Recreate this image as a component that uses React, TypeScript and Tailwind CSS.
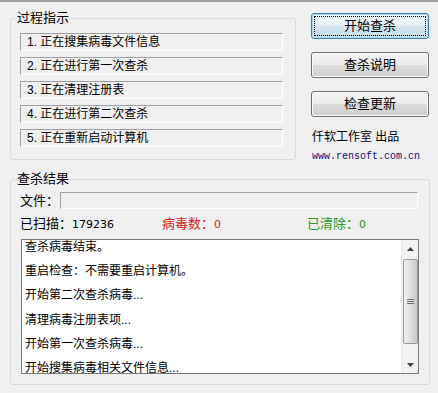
import React from 'react';

const cjk = { fontFamily: '"Liberation Sans", "Noto Sans CJK SC", sans-serif' };

const steps = [
    '1. 正在搜集病毒文件信息',
    '2. 正在进行第一次查杀',
    '3. 正在清理注册表',
    '4. 正在进行第二次查杀',
    '5. 正在重新启动计算机',
];

const logs = [
    '查杀病毒结束。',
    '重启检查：不需要重启计算机。',
    '开始第二次查杀病毒...',
    '清理病毒注册表项...',
    '开始第一次查杀病毒...',
    '开始搜集病毒相关文件信息...',
];

function Btn({ label, focused }: { label: string; focused?: boolean }) {
    return (
        <button
            className={
                focused
                    ? 'relative w-[118px] h-[26px] rounded-[3px] border border-[#3c7fb1] bg-[linear-gradient(to_bottom,#f2f8fb_0%,#e6f0f6_50%,#d4e4ee_50%,#c6dbe8_100%)] text-[13px] text-black shadow-[inset_0_0_0_1px_#a8d8f0]'
                    : 'relative w-[118px] h-[26px] rounded-[3px] border border-[#707070] bg-[linear-gradient(to_bottom,#f4f4f4_0%,#ebebeb_50%,#dddddd_50%,#cfcfcf_100%)] text-[13px] text-black shadow-[inset_0_0_0_1px_#fbfbfb]'
            }
            style={cjk}
        >
            {focused && <span className="absolute inset-[2px] border border-dotted border-black pointer-events-none"></span>}
            {label}
        </button>
    );
}

export default function App() {
    return (
        <div className="w-[438px] h-[393px] bg-[#f0f0f0] border-t-2 border-[#a0a0a0] overflow-hidden text-black" style={cjk}>
            {/* top section */}
            <div className="flex">
                <fieldset className="ml-[10px] mt-[8px] w-[286px] h-[150px] border border-[#dadada] rounded-[3px]">
                    <legend className="ml-[4px] px-[2px] text-[13px] leading-[16px]">过程指示</legend>
                    <div className="mt-[7px] ml-[9px] flex flex-col gap-[6px]">
                        {steps.map((s) => (
                            <div key={s} className="w-[263px] h-[18px] border border-t-[#a0a0a0] border-l-[#a0a0a0] border-b-white border-r-white pl-[6px] text-[12px] leading-[16px]">
                                {s}
                            </div>
                        ))}
                    </div>
                </fieldset>

                <div className="ml-[15px] mt-[11px] flex flex-col">
                    <div className="flex flex-col gap-[13px]">
                        <Btn label="开始查杀" focused />
                        <Btn label="查杀说明" />
                        <Btn label="检查更新" />
                    </div>
                    <div className="mt-[13px] ml-[1px] text-[12px] leading-[14px]">仟软工作室 出品</div>
                    <div className="mt-[7px] ml-[1px] text-[10px] leading-[12px] text-[#101080]" style={{ fontFamily: '"Liberation Mono", monospace' }}>
                        www.rensoft.com.cn
                    </div>
                </div>
            </div>

            {/* results */}
            <fieldset className="ml-[10px] mt-[8px] w-[420px] h-[214px] border border-[#dadada] rounded-[3px]">
                <legend className="ml-[4px] px-[2px] text-[13px] leading-[16px]">查杀结果</legend>

                <div className="mt-[5px] ml-[9px] flex items-center">
                    <span className="w-[40px] text-[13px] leading-[16px]">文件：</span>
                    <div className="w-[358px] h-[17px] border border-t-[#a0a0a0] border-l-[#a0a0a0] border-b-white border-r-white"></div>
                </div>

                <div className="mt-[7px] ml-[9px] flex items-center text-[13px] leading-[16px]">
                    <span className="w-[142px]">
                        已扫描：<span className="text-[11px]" style={{ fontFamily: '"DejaVu Sans", sans-serif' }}>179236</span>
                    </span>
                    <span className="w-[145px] text-[#d42020]">
                        病毒数：<span className="text-[11px]" style={{ fontFamily: '"DejaVu Sans", sans-serif' }}>0</span>
                    </span>
                    <span className="text-[#2a9a2a]">
                        已清除：<span className="text-[11px]" style={{ fontFamily: '"DejaVu Sans", sans-serif' }}>0</span>
                    </span>
                </div>

                <div className="mt-[6px] ml-[10px] w-[398px] h-[135px] border border-[#7a7a7a] bg-white flex overflow-hidden">
                    <div className="flex-1 pl-[3px] overflow-hidden">
                        <div className="-mt-[1px]">
                            {logs.map((l) => (
                                <div key={l} className="h-[24.2px] text-[12px] leading-[16px] whitespace-nowrap">
                                    {l}
                                </div>
                            ))}
                        </div>
                    </div>
                    {/* scrollbar */}
                    <div className="w-[17px] h-full bg-[#f2f2f2] border-l border-[#e8e8e8] flex flex-col items-center">
                        <div className="h-[17px] w-full flex items-center justify-center">
                            <svg width="7" height="4" viewBox="0 0 7 4"><path d="M3.5 0L7 4H0z" fill="#404040" /></svg>
                        </div>
                        <div className="mt-[2px] w-[15px] h-[85px] rounded-[2px] border border-[#9a9a9a] bg-[linear-gradient(to_right,#f0f0f0,#dedede_50%,#c8c8c8)] flex items-center justify-center">
                            <svg width="7" height="7" viewBox="0 0 7 7">
                                <path d="M0 1.5h7M0 3.5h7M0 5.5h7" stroke="#707070" strokeWidth="1" />
                            </svg>
                        </div>
                        <div className="flex-1"></div>
                        <div className="h-[17px] w-full flex items-center justify-center">
                            <svg width="7" height="4" viewBox="0 0 7 4"><path d="M0 0H7L3.5 4z" fill="#404040" /></svg>
                        </div>
                    </div>
                </div>
            </fieldset>
        </div>
    );
}
